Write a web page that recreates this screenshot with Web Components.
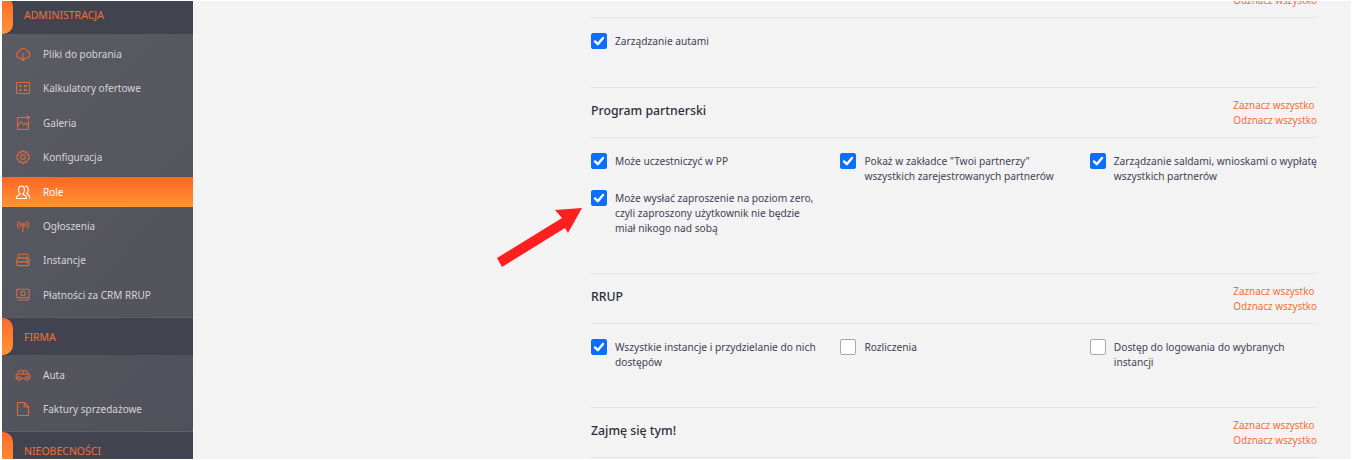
<!DOCTYPE html>
<html lang="pl">
<head>
<meta charset="utf-8">
<title>Role</title>
<style>
  html, body { margin: 0; height: 100%; background: #fff; }
  body { overflow: hidden; font-family: "Noto Sans", sans-serif; }
  app-shell { height: 460px; }
</style>
</head>
<body>
<app-shell>
  <side-nav slot="nav">
    <nav-group label="ADMINISTRACJA" first></nav-group>
    <nav-item icon="cloud">Pliki do pobrania</nav-item>
    <nav-item icon="calc">Kalkulatory ofertowe</nav-item>
    <nav-item icon="image">Galeria</nav-item>
    <nav-item icon="gear">Konfiguracja</nav-item>
    <nav-item icon="users" active>Role</nav-item>
    <nav-item icon="signal">Ogłoszenia</nav-item>
    <nav-item icon="server">Instancje</nav-item>
    <nav-item icon="money">Płatności za CRM RRUP</nav-item>
    <nav-group label="FIRMA"></nav-group>
    <nav-item icon="car">Auta</nav-item>
    <nav-item icon="file">Faktury sprzedażowe</nav-item>
    <nav-group label="NIEOBECNOŚCI"></nav-group>
  </side-nav>

  <perm-section style="margin-top:-34px;--body-h:69px">
    <perm-check checked>Zarządzanie autami</perm-check>
  </perm-section>
  <perm-section heading="Program partnerski" style="--body-h:135px">
    <perm-check checked>Może uczestniczyć w PP</perm-check>
    <perm-check checked>Pokaż w zakładce "Twoi partnerzy" wszystkich zarejestrowanych partnerów</perm-check>
    <perm-check checked>Zarządzanie saldami, wnioskami o wypłatę wszystkich partnerów</perm-check>
    <perm-check checked>Może wysłać zaproszenie na poziom zero, czyli zaproszony użytkownik nie będzie miał nikogo nad sobą</perm-check>
  </perm-section>
  <perm-section heading="RRUP" style="--body-h:83px">
    <perm-check checked>Wszystkie instancje i przydzielanie do nich dostępów</perm-check>
    <perm-check>Rozliczenia</perm-check>
    <perm-check>Dostęp do logowania do wybranych instancji</perm-check>
  </perm-section>
  <perm-section heading="Zajmę się tym!" style="--body-h:10px"></perm-section>

  <svg slot="overlay" class="arrow" width="90" height="66" viewBox="0 0 90 66" aria-hidden="true">
    <polygon fill="#fe1f1f" points="0,51 65,11 58,3 85,1 71,26 68,21 5,60"/>
  </svg>
</app-shell>

<script>
  const ICONS = {
    cloud: '<path d="M6 12H4.4a3.2 3.2 0 0 1-.4-6.3 4.2 4.2 0 0 1 8-.6 3.5 3.5 0 0 1-.2 6.9H10"/><path d="M8 7.5v7M5.8 12.3 8 14.5l2.2-2.2"/>',
    calc: '<rect x="1.5" y="2.5" width="13" height="11" rx=".5"/><path d="M4.3 6h2.2M9.2 6h2.4M4.3 10h2.2M9.2 10h2.4" stroke-width="2" stroke-linecap="butt"/>',
    image: '<path d="M11 2.5H2.5v12h11V6"/><path d="M2.5 11 6 6.5l2.8 3.2 1.9-1.7 2.8 3"/><path d="M13 1v3M11.5 2.5h3" stroke-width="1.4"/>',
    gear: '<path d="M8 1.4l1.5 1.7 2.2-.2.7 2.1 1.9 1.2-.8 1.8.8 1.8-1.9 1.2-.7 2.1-2.2-.2L8 14.6l-1.5-1.7-2.2.2-.7-2.1-1.9-1.2.8-1.8-.8-1.8 1.9-1.2.7-2.1 2.2.2z"/><circle cx="8" cy="8" r="2.4"/>',
    users: '<path d="M1.5 14.5v-1.3c0-1.5 3-2 3.7-3.2-1.4-1.4-1.9-3-1.7-5 .2-1.8 1.5-3 3-3s2.8 1.2 3 3c.2 2-.3 3.6-1.7 5 .7 1.2 3.7 1.7 3.7 3.2v1.3z"/><path d="M10.4 2c1.6.1 2.7 1.2 2.9 3 .2 1.9-.3 3.4-1.5 4.8.7 1 2.9 1.4 2.9 2.8v1.3"/>',
    signal: '<circle cx="8" cy="6.5" r="1"/><path d="M8 7.5V13.5M5.9 4.5c-.9 1.2-.9 2.8 0 4M10.1 4.5c.9 1.2.9 2.8 0 4M3.8 3c-1.6 2.1-1.6 5 0 7M12.2 3c1.6 2.1 1.6 5 0 7"/>',
    server: '<rect x="3" y="2.2" width="10" height="3.8" rx="1.6"/><rect x="1.8" y="6" width="12.4" height="3.8" rx="1.2"/><rect x="1.8" y="9.8" width="12.4" height="3.8" rx="1.2"/><path d="M11.5 7.9h1M11.5 11.7h1"/>',
    money: '<rect x="1.8" y="2.2" width="12.4" height="8.4" rx=".8"/><circle cx="8" cy="6.4" r="2.1"/><path d="M3 13h9.6c.8 0 1.6-.6 1.6-1.6"/>',
    car: '<path d="M2.2 11.5H1.2V8.4L2.6 7l1-2.6a1 1 0 0 1 1-.7h6.6a1 1 0 0 1 1 .7L13.2 7l1.6 1.4v3.1h-1"/><path d="M2.6 7h10.6M5.8 11.5h4.4M8 3.7V7"/><circle cx="4" cy="11.6" r="1.7"/><circle cx="12" cy="11.6" r="1.7"/>',
    file: '<path d="M2.5 1.5h6.7l4.3 4.3v8.7h-11z"/><path d="M9.2 1.5v4.3h4.3"/>'
  };

  class AppShell extends HTMLElement {
    constructor() {
      super();
      this.attachShadow({ mode: 'open' });
      this.shadowRoot.innerHTML = `
        <style>
          :host { display: flex; position: relative; box-sizing: border-box; width: 1352px; height: 460px; padding: 1px 1px 1px 2px; overflow: hidden; background: #fff; }
          .nav { flex: none; width: 191px; height: 100%; overflow: hidden; }
          .main { flex: 1; min-width: 0; background: #f3f3f3; overflow: hidden; padding: 0 34px 0 398px; }
          ::slotted(.arrow) { position: absolute; left: 497px; top: 207px; overflow: visible; }
        </style>
        <div class="nav"><slot name="nav"></slot></div>
        <div class="main"><slot></slot></div>
        <slot name="overlay"></slot>`;
    }
  }

  class SideNav extends HTMLElement {
    constructor() {
      super();
      this.attachShadow({ mode: 'open' });
      this.shadowRoot.innerHTML = `
        <style>
          :host { display: block; height: 100%; background: linear-gradient(135deg, #5b5b64 0%, #50505a 100%); font-family: "Noto Sans", sans-serif; }
        </style>
        <slot></slot>`;
    }
  }

  class NavGroup extends HTMLElement {
    constructor() {
      super();
      this.attachShadow({ mode: 'open' });
    }
    connectedCallback() {
      const first = this.hasAttribute('first');
      this.shadowRoot.innerHTML = `
        <style>
          :host { display: flex; align-items: center; box-sizing: border-box; position: relative; height: ${first ? 33 : 37}px; margin: ${first ? '0 0 5px' : '8px 0 5px'}; padding: ${first ? '0 0 5px 22px' : '1px 0 0 22px'}; background: #41444f; color: #f46f35; font-size: 10.5px; box-shadow: 0 -1px 0 #5f5f67; }
          .tab { position: absolute; left: 0; top: ${first ? -4 : 0}px; bottom: 0; width: 11px; background: linear-gradient(180deg, #ff6a2a, #ff9433); border-radius: 0 10px 10px 0; }
        </style>
        <span class="tab"></span><span>${this.getAttribute('label')}</span>`;
    }
  }

  class NavItem extends HTMLElement {
    constructor() {
      super();
      this.attachShadow({ mode: 'open' });
    }
    connectedCallback() {
      const active = this.hasAttribute('active');
      this.shadowRoot.innerHTML = `
        <style>
          :host { display: flex; align-items: center; box-sizing: border-box; height: 30px; margin-bottom: 4.4px; padding-left: 13px; color: ${active ? '#fff' : '#d4d4d8'}; font-size: 10px; ${active ? 'background: linear-gradient(180deg, #ff6528, #ff9433);' : ''} }
          svg { flex: none; width: 16px; height: 16px; margin-right: 12px; fill: none; stroke: ${active ? '#fff' : '#e0693a'}; stroke-width: 1.1; stroke-linecap: round; stroke-linejoin: round; }
        </style>
        <svg viewBox="0 0 16 16">${ICONS[this.getAttribute('icon')] || ''}</svg>
        <slot></slot>`;
    }
  }

  class PermSection extends HTMLElement {
    constructor() {
      super();
      this.attachShadow({ mode: 'open' });
    }
    connectedCallback() {
      this.shadowRoot.innerHTML = `
        <style>
          :host { display: block; font-family: "Noto Sans", sans-serif; color: #3f4254; }
          header { display: flex; justify-content: space-between; align-items: center; height: 51px; box-sizing: border-box; border-top: 1px solid #e6e6e6; border-bottom: 1px solid #e6e6e6; }
          h3 { margin: 0 0 5px; font-size: 12.3px; font-weight: 500; color: #2d2f3c; }
          .links { display: flex; flex-direction: column; padding-top: 1px; font-size: 9.9px; line-height: 15.5px; color: #fb6d34; white-space: nowrap; }
          .body { display: grid; grid-template-columns: repeat(3, 249.4px); align-content: start; row-gap: 6px; height: var(--body-h, auto); box-sizing: border-box; padding-top: 15px; }
        </style>
        <header>
          <h3>${this.getAttribute('heading') || ''}</h3>
          <div class="links"><a>Zaznacz wszystko</a><a>Odznacz wszystko</a></div>
        </header>
        <div class="body"><slot></slot></div>`;
    }
  }

  class PermCheck extends HTMLElement {
    constructor() {
      super();
      this.attachShadow({ mode: 'open' });
    }
    connectedCallback() {
      const on = this.hasAttribute('checked');
      this.shadowRoot.innerHTML = `
        <style>
          :host { display: flex; align-items: flex-start; gap: 8px; font-size: 10.2px; line-height: 15px; color: #3f4254; }
          .box { flex: none; box-sizing: border-box; width: 16px; height: 16px; border-radius: 2px; background: ${on ? '#0d6efd' : '#fff'}; border: 1px solid ${on ? '#0d6efd' : '#a7a7ad'}; display: flex; align-items: center; justify-content: center; }
          svg { width: 12px; height: 12px; fill: none; stroke: #fff; stroke-width: 2.4; stroke-linecap: round; stroke-linejoin: round; }
          .txt { width: 204px; padding-top: 1px; }
        </style>
        <span class="box">${on ? '<svg viewBox="0 0 12 12"><path d="M2 6.4l2.8 2.8L10 3"/></svg>' : ''}</span>
        <span class="txt"><slot></slot></span>`;
    }
  }

  customElements.define('app-shell', AppShell);
  customElements.define('side-nav', SideNav);
  customElements.define('nav-group', NavGroup);
  customElements.define('nav-item', NavItem);
  customElements.define('perm-section', PermSection);
  customElements.define('perm-check', PermCheck);
</script>
</body>
</html>
